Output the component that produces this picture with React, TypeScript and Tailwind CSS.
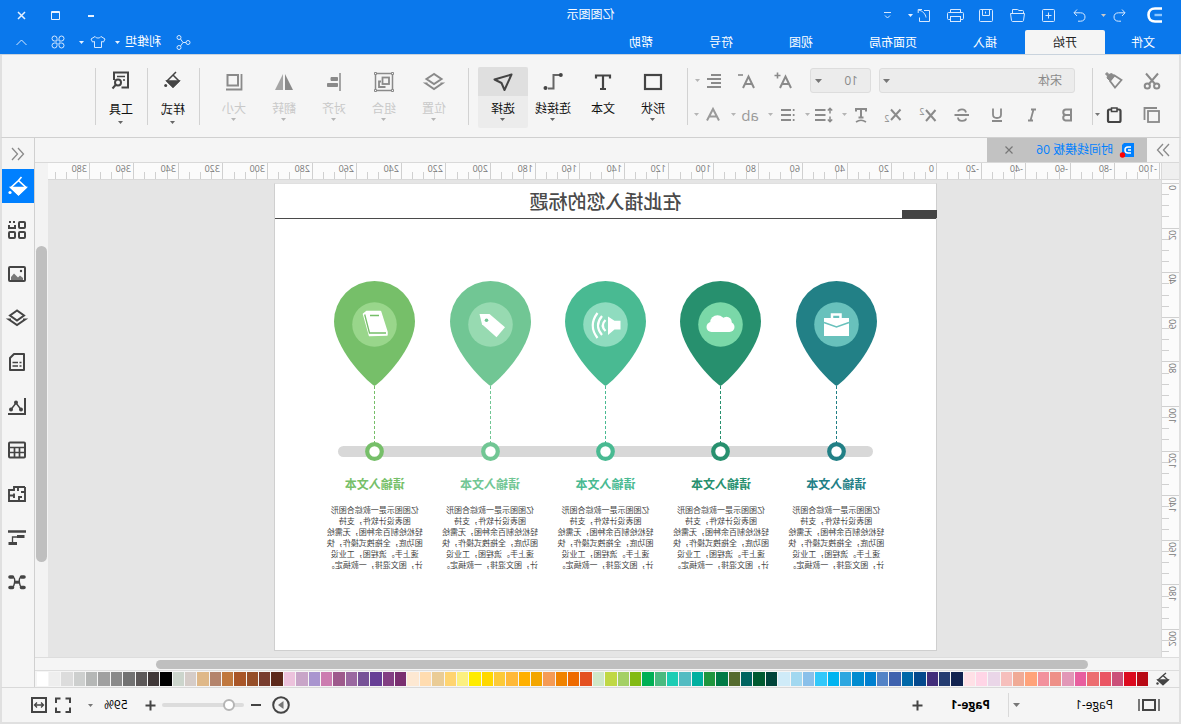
import React from "react";

const DARK = "#444444";
const MID = "#8a8a8a";

type IconProps = {
  size?: number;
  color?: string;
  width?: number;
  children: React.ReactNode;
};

function Icon({ size = 18, color = DARK, width = 2, children }: IconProps) {
  return (
    <svg
      width={size}
      height={size}
      viewBox={`0 0 ${size} ${size}`}
      fill="none"
      stroke={color}
      strokeWidth={width}
      className="shrink-0 overflow-visible"
      aria-hidden="true"
    >
      {children}
    </svg>
  );
}

function Caret({ color = "#777777", small = false }: { color?: string; small?: boolean }) {
  return (
    <svg width={small ? 5 : 7} height={small ? 3 : 4} viewBox="0 0 6 4" preserveAspectRatio="none" className="shrink-0" aria-hidden="true">
      <path d="M0 0H6L3 4Z" fill={color} />
    </svg>
  );
}

/* ---------- title bar ---------- */

const quickIcons: { name: string; art: React.ReactNode }[] = [
  {
    name: "重做",
    art: <path d="M10 1.5L13 4.8L10 8M13 4.8H6.5C3.5 4.8 2 6.6 2 9S3.5 13.2 6.5 13.2H9" />,
  },
  {
    name: "新建",
    art: (
      <>
        <rect x="1.5" y="1.5" width="12" height="12" rx="1" />
        <path d="M7.5 4.5V10.5M4.5 7.5H10.5" />
      </>
    ),
  },
  {
    name: "打开",
    art: (
      <>
        <path d="M1.5 5.5V3.5Q1.5 2.5 2.5 2.5H6L7.5 1.5H12.5V5.5" />
        <path d="M0.5 5.5H14.5L13.5 12.5Q13.3 13.5 12.300 13.5H2.7Q1.7 13.5 1.5 12.5Z" />
      </>
    ),
  },
  {
    name: "保存",
    art: (
      <>
        <rect x="1.5" y="1.5" width="13" height="12" rx="1" />
        <path d="M4.5 1.5V7.5H11.5V1.5M8.5 3.5V5.5" />
      </>
    ),
  },
  {
    name: "打印",
    art: (
      <>
        <path d="M2.5 4.5V1.5H12.5V4.5M2.5 11.5H1Q-0.5 11.5 -0.5 10.5V5.5Q-0.5 4.5 0.5 4.5H14.5Q15.5 4.5 15.5 5.5V10.5Q15.5 11.5 14.5 11.5H12.5" />
        <rect x="2.5" y="8.5" width="10" height="5" />
      </>
    ),
  },
  {
    name: "导出",
    art: (
      <>
        <path d="M8 2.5H2.5V13.5H12.5V9.5" />
        <path d="M10 1.5H13.8V5M13.5 2C9 3 6.5 6 6 9.5" />
      </>
    ),
  },
];

const tabs = ["插入", "页面布局", "视图", "符号", "帮助"];

function Header() {
  return (
    <header className="bg-[#0a78ec] text-white">
      <div className="grid h-[30px] grid-cols-[1fr_auto_1fr] items-center">
        <div className="flex items-center">
          <svg width="16" height="18" viewBox="0 0 16 18" fill="none" className="ml-[18px]" aria-hidden="true">
            <path d="M1 2.500H8C12 2.500 14.500 5 14.500 9S12 15.500 8 15.500H1" stroke="#fff" strokeWidth="2.600" />
            <path d="M1 9H8.500" stroke="#8cc6ff" strokeWidth="2.400" />
          </svg>
          <button aria-label="撤销" className="ml-[18px] flex w-[18px] justify-center">
            <Icon size={15} color="#d7e9ff" width={1}>
              <path d="M5 1.500L2 4.800L5 8M2 4.800H8.500C11.500 4.800 13 6.600 13 9S11.500 13.200 8.500 13.200H6" />
            </Icon>
          </button>
          <button aria-label="撤销列表" className="flex w-[14px] justify-center">
            <Caret color="#c9c9c9" small />
          </button>
          <div className="flex pl-[2px]">
            {quickIcons.map((q) => (
              <button key={q.name} aria-label={q.name} className="flex w-[31px] justify-center">
                <Icon size={15} color="#d7e9ff" width={1}>{q.art}</Icon>
              </button>
            ))}
          </div>
          <button aria-label="导出列表" className="-ml-2 flex w-[12px] justify-center">
            <Caret color="#e6f1ff" small />
          </button>
          <button aria-label="自定义" className="ml-[10px] flex w-[14px] justify-center">
            <Icon size={9} color="#d7e9ff" width={1}>
              <path d="M1 1.500H8M2 4.500L4.500 7L7 4.500" />
            </Icon>
          </button>
        </div>
        <h1 className="text-[12px] leading-4">亿图图示</h1>
        <div className="flex items-center justify-end pr-[12px]">
          <button aria-label="最小化" className="flex h-[20px] w-[34px] items-center justify-center">
            <span className="mt-[2px] h-[2px] w-[6px] bg-[#e6f1ff]" />
          </button>
          <button aria-label="最大化" className="flex w-[36px] justify-center">
            <Icon size={9} color="#e6f1ff" width={1}>
              <path d="M0.500 0.500H8.500V8.500H0.500ZM0 1.500H9" />
            </Icon>
          </button>
          <button aria-label="关闭" className="ml-[6px] flex w-[20px] justify-center">
            <Icon size={9} color="#e6f1ff" width={1.5}>
              <path d="M1 1L8 8M8 1L1 8" />
            </Icon>
          </button>
        </div>
      </div>
      <div className="flex h-[24px] text-[12px] leading-[22px]">
        <nav className="flex grow">
          <button className="px-[26px] pt-[2px]">文件</button>
          <button className="rounded-t-[2px] bg-[#f5f5f5] px-7 pt-[2px] text-[#222222]">开始</button>
          {tabs.map((t) => (
            <button key={t} className="px-7 pt-[2px]">{t}</button>
          ))}
        </nav>
        <div className="flex items-center pr-[14px]">
          <button className="flex items-center gap-[15px]">
            <Icon size={15} color="#d7e9ff" width={1}>
              <circle cx="3" cy="7.500" r="2" />
              <circle cx="12" cy="2.500" r="2" />
              <circle cx="12" cy="12.500" r="2" />
              <path d="M5 7.500H8L10.500 4M8 7.500L10.500 11" />
            </Icon>
            利维坦
          </button>
          <button aria-label="账户菜单" className="flex w-[15px] justify-center"><Caret color="#e6f1ff" small /></button>
          <button aria-label="主题" className="flex w-[24px] justify-center">
            <Icon size={16} color="#d7e9ff" width={1}>
              <path d="M5 2.500L1 5L2.500 8L4.500 7.500V13.500H11.500V7.500L13.500 8L15 5L11 2.500C10 4.500 6 4.500 5 2.500Z" />
            </Icon>
          </button>
          <button aria-label="主题列表" className="flex w-[9px] justify-center"><Caret color="#e6f1ff" small /></button>
          <button aria-label="应用" className="ml-[11px] flex w-[16px] justify-center">
            <Icon size={14} color="#d7e9ff" width={1}>
              <path d="M6 6H3.500A2.500 2.500 0 1 1 6 3.500ZM8 6H10.500A2.500 2.500 0 1 0 8 3.500ZM6 8H3.500A2.500 2.500 0 1 0 6 10.500ZM8 8H10.500A2.500 2.500 0 1 1 8 10.500Z" />
            </Icon>
          </button>
          <button aria-label="收起" className="ml-[20px] flex w-[16px] justify-center">
            <Icon size={11} color="#d7e9ff" width={1}>
              <path d="M0.500 8L5.500 3L10.500 8" />
            </Icon>
          </button>
        </div>
      </div>
    </header>
  );
}

/* ---------- ribbon ---------- */

function Slot({ label, caret, caretColor = "#b5b5b5", children }: { label: string; caret?: boolean; caretColor?: string; children: React.ReactNode }) {
  return (
    <button aria-label={label} className="flex h-[25px] shrink-0 items-center">
      <span className="flex w-[24px] items-center justify-center">{children}</span>
      {caret && (
        <span className="flex w-[8px] justify-center">
          <Caret color={caretColor} small />
        </span>
      )}
    </button>
  );
}

function Small({ y }: { y: number }) {
  return (
    <text x="14" y={y} textAnchor="middle" fontSize="9" fill={MID} stroke="none">
      2
    </text>
  );
}

function Divider() {
  return <span className="mt-px h-[57px] w-px shrink-0 bg-[#d2d2d2]" />;
}

type BigProps = { label: string; active?: boolean; disabled?: boolean; caret?: boolean; high?: boolean; children: React.ReactNode };

function BigButton({ label, active, disabled, caret = true, high, children }: BigProps) {
  return (
    <button
      disabled={disabled}
      className={`flex h-[61px] w-[50px] shrink-0 flex-col items-center rounded-[2px] text-[12px] leading-[18px] ${active ? "bg-[#ececec]" : ""} ${disabled ? "text-[#c9c9c9]" : "text-[#111111]"}`}
    >
      <span className={`flex w-full shrink-0 items-center justify-center rounded-t-[2px] ${high ? "mb-[9px] h-[25px]" : "mb-[4px] h-[29px]"} ${active ? "bg-[#dfdfdf]" : ""}`}>
        {children}
      </span>
      {label}
      {caret && (
        <span className={high ? "mt-[2px]" : ""}>
          <Caret color={disabled ? "#b5b5b5" : "#666666"} small />
        </span>
      )}
    </button>
  );
}

function Bucket({ color = DARK }: { color?: string }) {
  return (
    <Icon size={18} color={color} width={1.5}>
      <path d="M6 1L9 4L15 10L9 16L3 10L9 4" />
      <path d="M3 10H15L9 16Z" fill={color} />
      <circle cx="16.300" cy="14.500" r="1.500" fill={color} stroke="none" />
    </Icon>
  );
}

function Ribbon() {
  return (
    <section className="flex h-[83px] items-start border-x-2 border-b border-x-[#e0e0e0] border-b-[#d0d0d0] bg-[#f5f5f5] pt-[12px]">
      <div className="flex flex-col gap-[9px] pt-px pl-[15px]">
        <div className="flex gap-[14px]">
          <Slot label="剪切">
            <Icon color={MID}>
              <path d="M3 1.500L12 12M15 1.500L6 12" />
              <circle cx="4.300" cy="14" r="2.600" />
              <circle cx="13.700" cy="14" r="2.600" />
            </Icon>
          </Slot>
          <Slot label="格式刷">
            <Icon color={MID} width={1.8}>
              <path d="M1.500 8L8.500 3.500L13 9L8 15.500Z" />
              <path d="M8.500 3.500L13 9L16 6L15.500 4L17.500 2L16 0.500L14 2.500L11.500 1.500Z" fill={MID} strokeWidth="1" />
            </Icon>
          </Slot>
        </div>
        <div className="flex gap-[14px]">
          <Slot label="复制">
            <Icon color={MID} width={1.8}>
              <rect x="2" y="5" width="11" height="11" />
              <path d="M4 2H16.500V14" />
            </Icon>
          </Slot>
          <Slot label="粘贴" caret caretColor="#777777">
            <Icon width={2.200}>
              <rect x="2.500" y="3.500" width="12.500" height="12.500" rx="1.500" />
              <path d="M6 2H11.500V5.500H6Z" strokeWidth="1.500" fill="#f5f5f5" />
            </Icon>
          </Slot>
        </div>
      </div>
      <span className="w-px" />
      <Divider />
      <div className="flex flex-col gap-[9px] pt-px pl-[17px]">
        <div className="flex h-[25px] items-center text-[12px] text-[#8a8a8a]">
          <div className="relative flex items-center">
            <select aria-label="字体" className="h-[25px] w-[196px] appearance-none rounded-[3px] border border-[#dddddd] bg-[#ececec] pl-[12px]">
              <option>宋体</option>
            </select>
            <span className="pointer-events-none absolute right-[4px]"><Caret /></span>
          </div>
          <div className="relative ml-[8px] flex items-center">
            <select aria-label="字号" className="h-[25px] w-[61px] appearance-none rounded-[3px] border border-[#dddddd] bg-[#ececec] pl-[12px]">
              <option>10</option>
            </select>
            <span className="pointer-events-none absolute right-[5px]"><Caret /></span>
          </div>
          <div className="flex gap-[13px] pl-[15px]">
            <Slot label="增大字号">
              <Icon color={MID}>
                <path d="M1 16L6.500 4.500L12 16M3.500 12H9.500" />
                <path d="M11.500 3.500H17.500M14.500 0.500V6.500" strokeWidth="1.600" />
              </Icon>
            </Slot>
            <Slot label="减小字号">
              <Icon color={MID}>
                <path d="M1 16L6.500 4.500L12 16M3.500 12H9.500" />
                <path d="M12 3H17" strokeWidth="1.600" />
              </Icon>
            </Slot>
          </div>
          <div className="pl-[8px]">
            <Slot label="对齐方式" caret>
              <Icon color={MID}>
                <path d="M2 3H12M2 7H16M2 11H12M2 15H16" strokeWidth="1.800" />
              </Icon>
            </Slot>
          </div>
        </div>
        <div className="-ml-1 flex">
          <div className="flex gap-[11px]">
            <Slot label="加粗"><Icon color={MID}><path d="M5 3.500H10A2.700 2.700 0 0 1 10 9H5ZM5 9H10.500A2.800 2.800 0 0 1 10.500 14.500H5Z" /></Icon></Slot>
            <Slot label="倾斜"><Icon color={MID} width={1.8}><path d="M5 3.500H10M7.500 3.500L10.500 14.500M8 14.500H13" /></Icon></Slot>
            <Slot label="下划线"><Icon color={MID} width={1.8}><path d="M5 2.500V8.500Q5 12 9 12T13 8.500V2.500M4 15H14" /></Icon></Slot>
            <Slot label="删除线"><Icon color={MID} width={1.8}><path d="M13 5.500Q12.500 3.300 9 3.300T5 6.500M2 9H16.500M13 11.500Q13 14.800 9 14.800T5 12.500" /></Icon></Slot>
            <Slot label="上标"><Icon color={MID}><path d="M0.500 4L10 15M10 4L0.500 15" /><Small y={9} /></Icon></Slot>
            <Slot label="下标"><Icon color={MID}><path d="M0.500 3.500L10 14M10 3.500L0.500 14" /><Small y={16} /></Icon></Slot>
          </div>
          <div className="flex gap-[5px] pl-[7px]">
            <Slot label="文字效果" caret><Icon color={MID}><path d="M4 5.500V3H14V5.500M9 3V11.500M6.500 11.500H11.500" /><path d="M4 16Q9 12.500 14 16" strokeWidth="1.600" /></Icon></Slot>
            <Slot label="行距" caret><Icon color={MID}><path d="M7.500 4H18M7.500 9H18M7.500 14H18" /><path d="M3 2.500V7.500M3 10.500V15.500M0.800 4.500L3 2.300L5.200 4.500M0.800 13.500L3 15.700L5.200 13.500" strokeWidth="1.500" /></Icon></Slot>
            <Slot label="项目符号" caret><Icon color={MID}><path d="M5 4H15M5 9H15M5 14H15M1.500 4H3.200M1.500 9H3.200M1.500 14H3.200" /></Icon></Slot>
            <Slot label="高亮" caret><span className="text-[15px] leading-5 font-medium text-[#9a9a9a]">ab</span></Slot>
            <Slot label="字体颜色" caret><Icon color="#9a9a9a" width={2}><path d="M3 14.500L9 3L15 14.500M5.500 10.500H12.500" /></Icon></Slot>
          </div>
        </div>
      </div>
      <span className="w-[5px]" />
      <Divider />
      <div className="flex px-[9px]">
        <BigButton label="形状"><Icon><rect x="1" y="2" width="16" height="14" strokeWidth="2.200" /></Icon></BigButton>
        <BigButton label="文本" caret={false}><Icon><path d="M2 5.500V2.500H16V5.500M9 2.500V16M6 16H12" strokeWidth="2.200" /></Icon></BigButton>
        <BigButton label="连接线">
          <Icon size={20} width={2}>
            <path d="M3 3H9.500V16.500H15" stroke="#666666" />
            <circle cx="2.200" cy="3" r="2" fill={DARK} stroke="none" />
            <circle cx="17.500" cy="16" r="2" fill={DARK} stroke="none" />
          </Icon>
        </BigButton>
        <BigButton label="选择" active>
          <Icon size={20}><path d="M1.500 2.500L18.500 7.500L11.500 11L8.500 18Z" strokeLinejoin="round" /></Icon>
        </BigButton>
      </div>
      <Divider />
      <div className="flex px-[9px]">
        <BigButton label="位置" disabled>
          <Icon size={20} color={MID}><path d="M10 2L17.500 7L10 12L2.500 7Z" /><path d="M3.500 11.500H2L10 17L18 11.500H16.500" /></Icon>
        </BigButton>
        <BigButton label="组合" disabled>
          <Icon size={20} color={MID} width={1.5}>
            <rect x="1.500" y="1.500" width="17" height="17" />
            <rect x="5" y="5.500" width="6.500" height="6.500" strokeWidth="1.800" /><path d="M8.500 15H15V9.500H13" strokeWidth="1.800" />
            <path d="M0.500 0.500H2.500V2.500H0.500ZM17.500 0.500H19.500V2.500H17.500ZM0.500 17.500H2.500V19.500H0.500ZM17.500 17.500H19.500V19.500H17.500Z" fill="#f5f5f5" strokeWidth="1" />
          </Icon>
        </BigButton>
        <BigButton label="对齐" disabled>
          <Icon color={MID}><path d="M3 0V18" stroke="#a5a5a5" /><path d="M5.500 4.500H12V7.500H5.500ZM5.500 10.500H15.500V13.500H5.500Z" fill={MID} strokeWidth="1" /></Icon>
        </BigButton>
        <BigButton label="翻转" disabled>
          <Icon color={MID}><path d="M8 1V17H0Z" fill={MID} stroke="none" /><path d="M10 1V17H18Z" fill="#a5a5a5" stroke="none" /></Icon>
        </BigButton>
        <BigButton label="大小" disabled>
          <Icon color={MID}><rect x="5" y="2" width="10.500" height="10.500" /><path d="M1.500 1V16.500H17" strokeWidth="1.800" /></Icon>
        </BigButton>
      </div>
      <Divider />
      <span className="w-px" />
      <BigButton label="样式" high><Bucket /></BigButton>
      <Divider />
      <span className="w-px" />
      <BigButton label="工具" high>
        <Icon><path d="M2 16.500V1.500H16V9" /><path d="M5 5.500H13M5 9H7" strokeWidth="1.600" /><circle cx="12" cy="11.500" r="3" /><path d="M14 13.500L17.500 17.500M1 16.500H8.500" /></Icon>
      </BigButton>
      <Divider />
    </section>
  );
}

/* ---------- rulers ---------- */

const STEP = 44.6;

function HorizontalRuler() {
  const origin = 224;
  const marks = Array.from({ length: 25 }, (_, i) => i - 5);
  return (
    <div className="overflow-hidden border-b border-[#d9d9d9] bg-[#fbfbfb]">
      <svg width="100%" height="16" shapeRendering="crispEdges" className="block" aria-hidden="true">
        {marks.map((m) => {
          const x = Math.round(origin + m * STEP);
          return (
            <g key={m} stroke="#d0d0d0">
              <path d={`M${x + 0.5} 0V16`} />
              {[1, 2, 3].map((k) => (
                <path key={k} d={`M${Math.round(origin + (m + k / 4) * STEP) + 0.5} 9V16`} />
              ))}
              <text x={x + 3} y="9" fontSize="9" fill="#777777" stroke="none">{m * 20}</text>
            </g>
          );
        })}
      </svg>
    </div>
  );
}

function VerticalRuler() {
  const marks = Array.from({ length: 11 }, (_, i) => i);
  return (
    <div className="overflow-hidden border-r border-[#d9d9d9] bg-[#fbfbfb]">
      <svg width="17" height="100%" shapeRendering="crispEdges" className="block h-0 min-h-full" aria-hidden="true">
        {marks.map((m) => {
          const y = Math.round(3 + m * STEP);
          return (
            <g key={m} stroke="#d0d0d0">
              <path d={`M0 ${y + 0.5}H17`} />
              {[1, 2, 3].map((k) => (
                <path key={k} d={`M10 ${Math.round(3 + (m + k / 4) * STEP) + 0.5}H17`} />
              ))}
              <text transform={`translate(10 ${y + 2}) rotate(-90)`} textAnchor="end" fontSize="9" fill="#777777" stroke="none">{m * 20}</text>
            </g>
          );
        })}
      </svg>
    </div>
  );
}

/* ---------- drawing page ---------- */

const body = ["亿图图示是一款综合图形", "图表设计软件，支持", "轻松绘制百余种图，无需绘", "图功底，全拖拽式操作，快", "速上手。流程图，工业设", "计，图文混排，一款搞定。"];

const pins: { color: string; inner: string; art: React.ReactNode }[] = [
  {
    color: "#228086",
    inner: "#68c1bc",
    art: (
      <>
        <path d="M36.500 38V33.500H45V38" fill="none" stroke="#fff" strokeWidth="2.500" />
        <path d="M28 37H53V55H28Z" fill="#fff" />
        <path d="M28 41.500L40.500 46L53 41.500" fill="none" stroke="#68c1bc" strokeWidth="1.500" />
      </>
    ),
  },
  {
    color: "#27906e",
    inner: "#7ad8a8",
    art: (
      <g fill="#fff">
        <rect x="26.500" y="41" width="28" height="10" rx="5" />
        <circle cx="43.500" cy="41.500" r="7.300" />
        <circle cx="34.500" cy="41" r="5.200" />
      </g>
    ),
  },
  {
    color: "#49ba92",
    inner: "#8fdcbf",
    art: (
      <>
        <path d="M25.500 39.700H31.500L38 35.500V54L31.500 48.500H25.500Z" fill="#fff" />
        <path d="M40.500 39Q46 44.500 40.500 50M44 35Q52 44.500 44 54M48.500 32Q58 44.500 48.500 57" fill="none" stroke="#fff" strokeWidth="2.200" />
      </>
    ),
  },
  {
    color: "#71c694",
    inner: "#97dab1",
    art: (
      <>
        <path d="M51.500 33H41.500L26 46.300L34.500 56.300L49 43.300Z" fill="#fff" />
        <circle cx="44.500" cy="39.300" r="1.800" fill="#71c694" />
      </>
    ),
  },
  {
    color: "#76bf69",
    inner: "#99d68b",
    art: (
      <>
        <path d="M51.500 33L48.500 30.500H34.500L28 51V54L45.500 54.500Z" fill="#fff" stroke="#fff" strokeWidth="1.500" strokeLinejoin="round" />
        <path d="M50.300 33.500L45.500 52H29M45 34.500H36" fill="none" stroke="#76bf69" strokeWidth="1.300" />
      </>
    ),
  },
];

function Page() {
  return (
    <article className="w-[663px] border border-t-[#e0e0e0] border-r-[#cfcfcf] border-b-[#cfcfcf] border-l-[#cfcfcf] bg-white pb-[80px]">
      <div className="relative flex h-[35px] items-center justify-center border-b border-[#4a4a4a] pt-px">
        <h2 className="text-[19px] leading-7 font-medium text-[#4a4a4a]">在此插入您的标题</h2>
        <span className="absolute bottom-0 -left-px h-[8px] w-[35px] bg-[#444444]" />
      </div>
      <div className="relative mt-[62px] ml-[42px] flex w-[577px]">
        <span className="absolute top-[165px] right-[21px] left-[21px] h-[11px] rounded-full bg-[#d8d8d8]" />
        {pins.map((p) => (
          <section key={p.color} className="relative flex flex-1 flex-col items-center">
            <svg width="81" height="180" viewBox="0 0 81 180" aria-hidden="true">
              <path d="M40.500 105C30 98 0 66 0 40.500A40.500 40.500 0 0 1 81 40.500C81 66 51 98 40.500 105Z" fill={p.color} />
              <circle cx="40.500" cy="43.500" r="22.300" fill={p.inner} />
              {p.art}
              <path d="M40.500 105V162" stroke={p.color} strokeDasharray="3 2" shapeRendering="crispEdges" />
              <circle cx="40.500" cy="170.500" r="7.300" fill="#fff" stroke={p.color} strokeWidth="4.200" />
            </svg>
            <h3 className="mt-[16px] text-[12px] leading-4 font-bold" style={{ color: p.color }}>请输入文本</h3>
            <p className="mt-[11px] text-center text-[8px] leading-[11px] whitespace-nowrap text-[#444444]">
              {body.map((line) => (
                <span key={line} className="block">{line}</span>
              ))}
            </p>
          </section>
        ))}
      </div>
    </article>
  );
}

/* ---------- side panel ---------- */

const panel: { name: string; art: React.ReactNode }[] = [
  {
    name: "符号库",
    art: (
      <>
        <rect x="1" y="1" width="6" height="6" rx="1" /><path d="M11 4V7H17V4M11 1H13M15 1H17" />
        <rect x="1" y="11" width="6" height="6" rx="1" /><rect x="11" y="11" width="6" height="6" rx="1" />
      </>
    ),
  },
  {
    name: "图片",
    art: (
      <>
        <rect x="1" y="2" width="16" height="14" rx="1" /><circle cx="5" cy="6" r="1.200" fill={DARK} stroke="none" />
        <path d="M3 15V13L6 10.500L8 12.500L12 8.500L15 12V15Z" fill="#777777" stroke="none" />
      </>
    ),
  },
  { name: "图层", art: <><path d="M9 1.500L16 6.500L9 11.500L2 6.500Z" /><path d="M3 10.500H1L9 16L17 10.500H15" /></> },
  {
    name: "备注",
    art: <><path d="M2 1H12L16 5V17H2Z" strokeLinejoin="round" /><path d="M4.500 9.500H6.500M8 9.500H13.500M4.500 13H6.500M8 13H13.500" strokeWidth="1.700" /></>,
  },
  {
    name: "图表",
    art: (
      <>
        <path d="M1 1V17H18" /><path d="M5 12.500L10 6L15 12.500" strokeWidth="1.400" />
        <circle cx="5" cy="12.500" r="2" fill={DARK} stroke="none" /><circle cx="10" cy="5.500" r="2" fill={DARK} stroke="none" /><circle cx="15" cy="12.500" r="2" fill={DARK} stroke="none" />
      </>
    ),
  },
  { name: "表格", art: <><rect x="1" y="1.500" width="16" height="15" rx="1" /><path d="M1 6.500H17M1 11.500H17M6.500 6.500V16M11.500 6.500V16" strokeWidth="1.700" /></> },
  { name: "平面图", art: <path d="M1 2V16H17V5H12V2H1M1 7H5M8 2V6M17 10.500H12M12 8.500V13M7 16V12H4" strokeWidth="1.900" /> },
  { name: "甘特图", art: <><path d="M0 2.500H18" strokeWidth="2.500" /><path d="M13.500 14V8H8" strokeWidth="1.300" /><path d="M1.500 7.500H9M9 14.500H17.500" strokeWidth="3" /></> },
  {
    name: "思维导图",
    art: (
      <>
        <path d="M4 4C9 4 6 14 4 14.500M14 4C9 4 12 14 14 14.500" strokeWidth="1.400" />
        <path d="M2 4H4.500M13.500 4H16M2 14.500H4.500M13.500 14.500H16" strokeWidth="3.600" strokeLinecap="round" /><path d="M6.500 9.200H11.500" strokeWidth="3" />
      </>
    ),
  },
];

function SidePanel() {
  return (
    <aside className="flex w-[33px] shrink-0 flex-col border-l border-[#d0d0d0] bg-[#f5f5f5]">
      <button aria-label="展开面板" className="flex h-[31px] items-center justify-center">
        <Icon size={14} color={MID} width={1.3}><path d="M7 1L1.500 7L7 13M13 1L7.500 7L13 13" /></Icon>
      </button>
      <div className="flex flex-col gap-[10px]">
        <button aria-label="样式" className="flex h-[34px] items-center justify-center bg-[#0080ff]">
          <svg width="20" height="20" viewBox="0 0 20 20" fill="none" stroke="#fff" strokeWidth="1.700" aria-hidden="true">
            <path d="M6.500 1L9.500 4.500L17 11.500L9.500 18.500L2 11.500L9.500 4.500" />
            <path d="M2 11.500H17L9.500 18.500Z" fill="#fff" />
            <circle cx="18" cy="16.500" r="1.600" fill="#fff" stroke="none" />
          </svg>
        </button>
        {panel.map((p) => (
          <button key={p.name} aria-label={p.name} className="flex h-[34px] items-center justify-center pl-[2px]">
            <Icon>{p.art}</Icon>
          </button>
        ))}
      </div>
    </aside>
  );
}

/* ---------- colour strip and status bar ---------- */

const swatches = (
  "b80914 dc0a1e cb5079 ea5563 ec6d70 e85f9f e297b7 ee9088 f2919d ffa37a f0ab96 f6bfbc ead6e8 ffd5e6 ffe0e6 11224f 243b70 422d7a 04498d 0068a8 3f62ae 5383c6 " +
  "0080d0 008cd0 2da7e0 00b4f0 32c8fa 8ac0ea a2d8f0 cfebf8 00443a 005a30 006460 556b2f 007b46 1f963e 00b0a0 53bcc2 1ccdb4 4aba80 00b055 82ba14 a4d065 c0d845 cfe8c8 e45020 " +
  "ee6a00 f08300 f59b55 f3a600 ffb000 ffb938 fcca38 ffd800 ffec00 fcf080 ffd470 eacc96 ffdcb0 fde8d2 7a2f70 833f83 673f96 775297 9a68a0 9e5a8c cc7cb0 a995cf c8a5c8 ecc2dc " +
  "5c281a 783c2e 964e28 a95628 c0783e b4846c dfb888 d5ccc8 ccd5cc 000000 403838 5c5858 727272 8a8a8a a0a0a0 b5b7b6 cdcfce dcdcdc eeeeee ffffff"
).split(" ");

function StatusBar() {
  return (
    <footer className="flex h-[37px] items-center border-x-2 border-t border-b-2 border-x-[#e0e0e0] border-t-[#d9d9d9] border-b-[#e0e0e0] bg-[#f5f5f5] text-[12px] text-black">
      <button aria-label="页面视图" className="ml-[19px]">
        <svg width="22" height="14" viewBox="0 0 22 14" fill="none" stroke={DARK} strokeWidth="2" aria-hidden="true">
          <rect x="5" y="2" width="12" height="10" />
          <path d="M1 1V13M21 1V13" stroke="#777777" />
        </svg>
      </button>
      <button className="ml-[25px] flex w-[100px] items-center justify-between">Page-1 <Caret /></button>
      <span className="ml-[4px] h-[24px] w-px bg-[#d9d9d9]" />
      <button className="ml-[18px] font-bold">Page-1</button>
      <button aria-label="添加页面" className="ml-[28px]"><Icon size={11}><path d="M5.500 0.500V10.500M0.500 5.500H10.500" /></Icon></button>
      <div className="ml-auto flex items-center pr-[29px]">
        <button aria-label="播放"><Icon><circle cx="9" cy="9" r="7.800" /><path d="M6.500 5L12 9L6.500 13Z" fill="#777777" stroke="none" /></Icon></button>
        <button aria-label="缩小" className="ml-[11px]"><Icon size={10}><path d="M0 5H10" /></Icon></button>
        <input
          type="range"
          aria-label="缩放"
          defaultValue={13}
          className="ml-[7px] h-[4px] w-[82px] appearance-none rounded-full bg-[#dcdcdc] [&::-webkit-slider-thumb]:h-[12px] [&::-webkit-slider-thumb]:w-[12px] [&::-webkit-slider-thumb]:appearance-none [&::-webkit-slider-thumb]:rounded-full [&::-webkit-slider-thumb]:border-2 [&::-webkit-slider-thumb]:border-[#b5b5b5] [&::-webkit-slider-thumb]:bg-white"
        />
        <button aria-label="放大" className="ml-[6px]"><Icon size={11}><path d="M5.500 0.500V10.500M0.500 5.500H10.500" /></Icon></button>
        <button className="ml-[17px] flex items-center gap-[11px]">59% <Caret small /></button>
        <button aria-label="全屏" className="ml-[17px]"><Icon size={16}><path d="M1 6V1.500H5.500M10.500 1.500H15V6M15 10.500V15H10.500M5.500 15H1V10.500" /></Icon></button>
        <button aria-label="适合宽度" className="ml-[8px]">
          <Icon size={16}><rect x="1" y="1" width="14" height="14" /><path d="M4 8H12M6 5.500L3.500 8L6 10.500M10 5.500L12.500 8L10 10.500" strokeWidth="1.300" /></Icon>
        </button>
      </div>
    </footer>
  );
}

export default function App() {
  return (
    <div className="flex min-h-screen -scale-x-100 flex-col overflow-hidden bg-[#f5f5f5] font-['Open_Sans','Noto_Sans_CJK_SC',sans-serif]">
      <Header />
      <div className="h-px bg-[#c9d3dd]" />
      <Ribbon />
      <main className="flex grow border-x-2 border-[#e0e0e0]">
        <div className="flex min-w-0 grow flex-col">
          <div className="flex h-[25px] shrink-0 border-b border-[#d9d9d9]">
            <button aria-label="展开库" className="flex w-[32px] items-center justify-center">
              <Icon size={14} color={MID} width={1.3}><path d="M1 1L6.500 7L1 13M7 1L12.500 7L7 13" /></Icon>
            </button>
            <div className="flex w-[160px] items-center bg-[#c2c2c2] pl-[13px] text-[12px] text-[#0080ff]">
              <svg width="15" height="16" viewBox="0 0 15 16" fill="none" aria-hidden="true">
                <path d="M0 1H10L12 3V15H0Z" fill="#0080ff" />
                <path d="M3 5H6Q9 5 9 8T6 11H3M3 8H6" stroke="#fff" strokeWidth="1.500" />
                <circle cx="11.500" cy="13" r="2.700" fill="#ff0000" />
              </svg>
              <span className="ml-[6px]">时间线模板 06</span>
              <button aria-label="关闭标签" className="mr-[18px] ml-auto">
                <Icon size={8} color="#777777" width={1.2}><path d="M0.500 0.500L7.500 7.500M7.500 0.500L0.500 7.500" /></Icon>
              </button>
            </div>
          </div>
          <div className="grid grow grid-cols-[18px_minmax(0,1fr)_13px] grid-rows-[17px_1fr]">
            <div className="border-r border-b border-[#d9d9d9] bg-[#efefef]" />
            <HorizontalRuler />
            <div className="row-span-2 bg-[#f3f3f3] px-px pt-[83px]">
              <div className="h-[316px] rounded-full bg-[#bfbfbf]" />
            </div>
            <VerticalRuler />
            <div className="overflow-hidden bg-[#e5e5e5] pt-[3px] pb-[5px] pl-[224px]">
              <Page />
            </div>
          </div>
          <div className="flex h-[14px] shrink-0 items-center border-y border-[#dddddd] pr-[121px] pl-[91px]">
            <div className="h-[9px] grow rounded-full bg-[#bfbfbf]" />
          </div>
          <div className="flex h-[16px] shrink-0 items-center pr-px">
            <span className="flex w-[31px] shrink-0 justify-center"><Icon size={14} width={1.400}><path d="M4 1L7 3.500L12 8L7 12.500L2 8L7 3.500" /><path d="M2 8H12L7 12.500Z" fill={DARK} /><circle cx="12.500" cy="11.500" r="1.200" fill={DARK} stroke="none" /></Icon></span>
            <div className="flex h-[14px] grow gap-px">
              {swatches.map((c, i) => (
                <button key={i} aria-label={`#${c}`} className="min-w-0 flex-1" style={{ backgroundColor: `#${c}` }} />
              ))}
            </div>
          </div>
        </div>
        <SidePanel />
      </main>
      <StatusBar />
    </div>
  );
}
